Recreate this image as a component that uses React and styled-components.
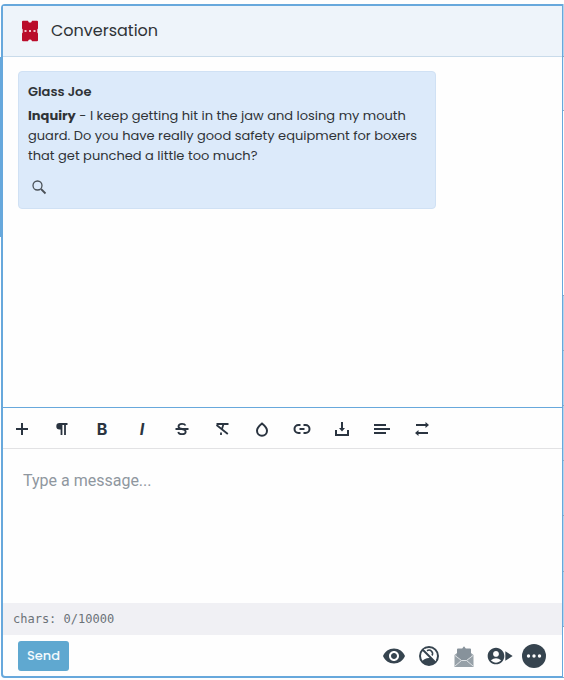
import React, { useState, useCallback } from 'react';
import styled, { createGlobalStyle } from 'styled-components';
import { MdVisibility, MdAccountCircle, MdPlayArrow } from 'react-icons/md';

// #region constants
const MAX_CHARS = 10000;

const colors = {
  border: '#67a8dc',
  ink: '#2a3440',
  text: '#2f3337',
  icon: '#36444f',
  paper: '#fefefe',
};

const uiFont = "Poppins, Inter, 'Open Sans', sans-serif";
// #endregion

// #region styled components
const GlobalStyle = createGlobalStyle`
  * {
    box-sizing: border-box;
  }

  body {
    margin: 0;
    background: ${colors.paper};
    color: ${colors.text};
    font-family: ${uiFont};
  }
`;

const Page = styled.div`
  position: relative;
  display: flex;
  min-height: 100vh;
  padding: 4px 0 2px 1px;
`;

const Panel = styled.main`
  display: flex;
  flex: 1;
  flex-direction: column;
  min-width: 0;
  border: 2px solid ${colors.border};
  border-right-width: 1px;
  border-radius: 4px 0 0 4px;
`;

const ActiveEdge = styled.div`
  position: absolute;
  top: 57px;
  left: 0;
  width: 2px;
  height: 180px;
  background: ${colors.border};
`;

const NextPanel = styled.aside`
  display: flex;
  flex-direction: column;
  width: 1px;
`;

const NextPanelRow = styled.div`
  flex: ${({ $grow }) => $grow};
  border-bottom: 1px solid #8fa9bf;
  background: ${({ $fill }) => $fill};
`;

const Header = styled.header`
  display: flex;
  align-items: center;
  gap: 10px;
  height: 51px;
  padding: 0 16px;
  border-bottom: 1px solid #c9dbea;
  background: #eef4fa;
`;

const Title = styled.h1`
  margin: 0;
  font-size: 16px;
  font-weight: 400;
  line-height: 24px;
`;

const Messages = styled.section`
  flex: 1;
  padding: 14px 15px;
`;

const Message = styled.article`
  max-width: 418px;
  padding: 10px 9px;
  border: 1px solid #d0e1f4;
  border-radius: 4px;
  background: #dceafa;
  font-size: 13px;
  font-weight: 400;
  line-height: 20px;
`;

const Author = styled.h2`
  margin: 0 0 4px;
  font-size: 13px;
  font-weight: 600;
  line-height: 20px;
`;

const MessageText = styled.p`
  margin: 0;
`;

const Subject = styled.strong`
  font-weight: 700;
`;

const SearchButton = styled.button`
  display: flex;
  align-items: center;
  justify-content: center;
  width: 22px;
  height: 22px;
  margin-top: 10px;
  padding: 0;
  border: 0;
  background: none;
  color: #4a5157;
`;

const Toolbar = styled.div`
  display: flex;
  height: 42px;
  padding-top: 2px;
  border-top: 1px solid ${colors.border};
  border-bottom: 1px solid #e2e2e4;
`;

const ToolButton = styled.button`
  display: flex;
  align-items: center;
  justify-content: center;
  width: 40px;
  padding: 0 2px 0 0;
  border: 0;
  background: none;
  color: ${colors.ink};
  font-family: Inter, sans-serif;
  font-size: 16px;
  font-weight: 700;
  font-style: ${({ $italic }) => ($italic ? 'italic' : 'normal')};
`;

const Editor = styled.textarea`
  display: block;
  width: 100%;
  height: 154px;
  padding: 20px;
  border: 0;
  outline: 0;
  background: none;
  color: ${colors.text};
  font-family: Roboto, sans-serif;
  font-size: 16px;
  line-height: 24px;
  resize: none;

  &::placeholder {
    color: #8f979f;
    opacity: 1;
  }
`;

const Counter = styled.div`
  padding: 0 10px;
  background: #f0f0f4;
  color: #6b7278;
  font-family: 'DejaVu Sans Mono', monospace;
  font-size: 12px;
  line-height: 32px;
`;

const Footer = styled.footer`
  display: flex;
  align-items: center;
  justify-content: space-between;
  height: 41px;
  padding: 0 16px 0 15px;
`;

const SendButton = styled.button`
  height: 30px;
  padding: 0 9px;
  border: 0;
  border-radius: 3px;
  background: #5fa8d0;
  color: #f3fafd;
  font-family: ${uiFont};
  font-size: 13px;
  font-weight: 500;
`;

const Actions = styled.div`
  display: flex;
  align-items: center;
  gap: 11px;
`;

const ActionButton = styled.button`
  display: flex;
  align-items: center;
  justify-content: center;
  width: 24px;
  height: 24px;
  padding: 0;
  border: 0;
  background: none;
  color: ${({ $muted }) => ($muted ? '#87929b' : colors.icon)};
`;
// #endregion

// #region icons
const ToolIcon = ({ children }) => (
  <svg
    width="24"
    height="24"
    viewBox="0 0 24 24"
    fill="none"
    stroke="currentColor"
    strokeWidth="2"
    aria-hidden="true"
  >
    {children}
  </svg>
);

const TicketIcon = () => (
  <svg width="22" height="22" viewBox="0 0 22 22" aria-hidden="true">
    <path
      d="M4 .8h4.800c.3 0 .4.300.5.600a1.800 1.800 0 0 0 3.400 0c.1-.3.200-.6.500-.6H18a1 1 0 0 1 1 1v6.700l-.7 1v3l.7 1v6.700a1 1 0 0 1-1 1h-4.800c-.3 0-.4-.3-.5-.6a1.800 1.800 0 0 0-3.400 0c-.1.300-.2.600-.5.600H4a1 1 0 0 1-1-1v-6.700l.7-1v-3l-.7-1V1.800a1 1 0 0 1 1-1z"
      fill="#ba0c2a"
    />
    <path d="M5.500 11h2M10 11h2M14.500 11h2" stroke="#fff" strokeWidth="1.500" />
  </svg>
);

const SearchIcon = () => (
  <svg
    width="16"
    height="16"
    viewBox="0 0 16 16"
    fill="none"
    stroke="currentColor"
    aria-hidden="true"
  >
    <circle cx="6.500" cy="6.500" r="4.500" strokeWidth="1.300" />
    <path d="M10 10l4.500 4.500" strokeWidth="1.800" />
  </svg>
);

const NoUserIcon = () => (
  <svg width="24" height="24" viewBox="0 0 24 24" aria-hidden="true">
    <circle
      cx="12"
      cy="12"
      r="9"
      fill="none"
      stroke="currentColor"
      strokeWidth="2"
    />
    <path
      d="M5 17.500c1.500-2.300 4-3.500 7-3.500h2l4.800 4A9 9 0 0 1 5 17.500z"
      fill="currentColor"
    />
    <path
      d="M10 6.800a3.500 3.500 0 0 1 5 4.700"
      fill="none"
      stroke="currentColor"
      strokeWidth="1.500"
    />
    <path d="M6.800 5.200l12 12" stroke="#fefefe" strokeWidth="1.200" />
    <path d="M5.500 5.500l13 13" stroke="currentColor" strokeWidth="2" />
  </svg>
);

const MailIcon = () => (
  <svg width="24" height="24" viewBox="0 0 24 24" aria-hidden="true">
    <path d="M2.500 11L5 9h14l2.500 2v12h-19z" fill="#97a1a8" />
    <path
      d="M5 5.500q0-1 1-1h4.200L12 2.200l1.800 2.300H18q1 0 1 1V13l-4.500 3.500h-5L5 13z"
      fill="currentColor"
    />
    <path
      d="M3 11.500l6.500 5L3 22M21 11.500l-6.500 5L21 22M9.500 16.500h5"
      fill="none"
      stroke="#dde1e4"
      strokeWidth="1"
    />
  </svg>
);

const MoreIcon = () => (
  <svg width="24" height="24" viewBox="0 0 24 24" aria-hidden="true">
    <circle cx="12" cy="12" r="12" fill="currentColor" />
    <circle cx="6.500" cy="12" r="1.700" fill="#fff" />
    <circle cx="12" cy="12" r="1.700" fill="#fff" />
    <circle cx="17.500" cy="12" r="1.700" fill="#fff" />
  </svg>
);

const AssignIcon = styled.span`
  display: flex;
  align-items: center;

  svg + svg {
    margin: 0 -4px 0 -6px;
  }
`;
// #endregion

const tools = [
  { label: 'Insert', icon: <path d="M12 6v12M6 12h12" /> },
  {
    label: 'Paragraph format',
    icon: (
      <>
        <path d="M17.500 7H10M11.500 6.500V18M15 6.500V18" strokeWidth="1.800" />
        <path d="M12 6H9.500a3.200 3.200 0 0 0 0 6.400H12z" fill="currentColor" stroke="none" />
      </>
    ),
  },
  { label: 'Bold', text: 'B' },
  { label: 'Italic', text: 'I', italic: true },
  {
    label: 'Strikethrough',
    icon: (
      <path d="M15.500 8.500C15 7.300 13.700 6.800 12 6.800c-2.200 0-3.500 1-3.500 2.600 0 1.400 1.200 2.100 3.500 2.600s3.700 1.200 3.700 2.700-1.400 2.500-3.700 2.500c-2 0-3.400-.8-3.800-2.200M5.500 12h13" strokeWidth="1.800" />
    ),
  },
  {
    label: 'Clear formatting',
    icon: <path d="M6.500 7h12M6.500 8l11.300 9M13.500 7l-1.500 5M11 15.500V18" strokeWidth="1.800" />,
  },
  {
    label: 'Text color',
    icon: <path d="M12 6.500s-5 4-5 7.200a5 5 0 0 0 10 0c0-3.200-5-7.200-5-7.200z" />,
  },
  {
    label: 'Insert link',
    icon: <path d="M10.500 8H8.500a4 4 0 0 0 0 8h2M13.500 8h2a4 4 0 0 1 0 8h-2M9.500 12h5" />,
  },
  {
    label: 'Insert file',
    icon: (
      <>
        <path d="M12 5v8M6 13v5h12v-5" />
        <path d="M9 11h6l-3 3.500z" fill="currentColor" stroke="none" />
      </>
    ),
  },
  { label: 'Align', icon: <path d="M4 8h12M4 12h16M4 16h12" /> },
  {
    label: 'Switch direction',
    icon: (
      <>
        <path d="M6 8h10M8 16h10" />
        <path d="M15.500 5l3.500 3-3.500 3zM8.500 13L5 16l3.500 3z" fill="currentColor" stroke="none" />
      </>
    ),
  },
];

export default function App() {
  const [message, setMessage] = useState('');

  const handlesOnMessageChange = useCallback(event => {
    setMessage(event.target.value);
  }, []);

  return (
    <Page>
      <GlobalStyle />
      <Panel>
        <Header>
          <TicketIcon />
          <Title>Conversation</Title>
        </Header>

        <Messages>
          <Message>
            <Author>Glass Joe</Author>
            <MessageText>
              <Subject>Inquiry</Subject> - I keep getting hit in the jaw and
              losing my mouth guard. Do you have really good safety equipment
              for boxers that get punched a little too much?
            </MessageText>
            <SearchButton type="button" aria-label="View message">
              <SearchIcon />
            </SearchButton>
          </Message>
        </Messages>

        <Toolbar role="toolbar" aria-label="Formatting">
          {tools.map(({ label, icon, text, italic }) => (
            <ToolButton
              key={label}
              type="button"
              aria-label={label}
              $italic={italic}
            >
              {icon ? <ToolIcon>{icon}</ToolIcon> : text}
            </ToolButton>
          ))}
        </Toolbar>
        <Editor
          aria-label="Message"
          placeholder="Type a message..."
          maxLength={MAX_CHARS}
          value={message}
          onChange={handlesOnMessageChange}
        />
        <Counter>
          chars: {message.length}/{MAX_CHARS}
        </Counter>

        <Footer>
          <SendButton type="button">Send</SendButton>
          <Actions>
            <ActionButton type="button" aria-label="Watch">
              <MdVisibility size={24} />
            </ActionButton>
            <ActionButton type="button" aria-label="Unassign">
              <NoUserIcon />
            </ActionButton>
            <ActionButton type="button" aria-label="Mark as read" $muted>
              <MailIcon />
            </ActionButton>
            <ActionButton type="button" aria-label="Assign">
              <AssignIcon>
                <MdAccountCircle size={20} />
                <MdPlayArrow size={16} />
              </AssignIcon>
            </ActionButton>
            <ActionButton type="button" aria-label="More">
              <MoreIcon />
            </ActionButton>
          </Actions>
        </Footer>
      </Panel>
      <NextPanel>
        <NextPanelRow $grow={53} $fill="#b5d3ec" />
        <NextPanelRow $grow={54} $fill="#e3edf6" />
        <NextPanelRow $grow={186} $fill="#fefefe" />
        <NextPanelRow $grow={55} $fill="#b5d3ec" />
        <NextPanelRow $grow={55} $fill="#b5d3ec" />
        <NextPanelRow $grow={55} $fill="#b5d3ec" />
        <NextPanelRow $grow={55} $fill="#b5d3ec" />
        <NextPanelRow $grow={55} $fill="#b5d3ec" />
        <NextPanelRow $grow={55} $fill="#b5d3ec" />
        <NextPanelRow $grow={51} $fill="#fefefe" />
      </NextPanel>
      <ActiveEdge />
    </Page>
  );
}
